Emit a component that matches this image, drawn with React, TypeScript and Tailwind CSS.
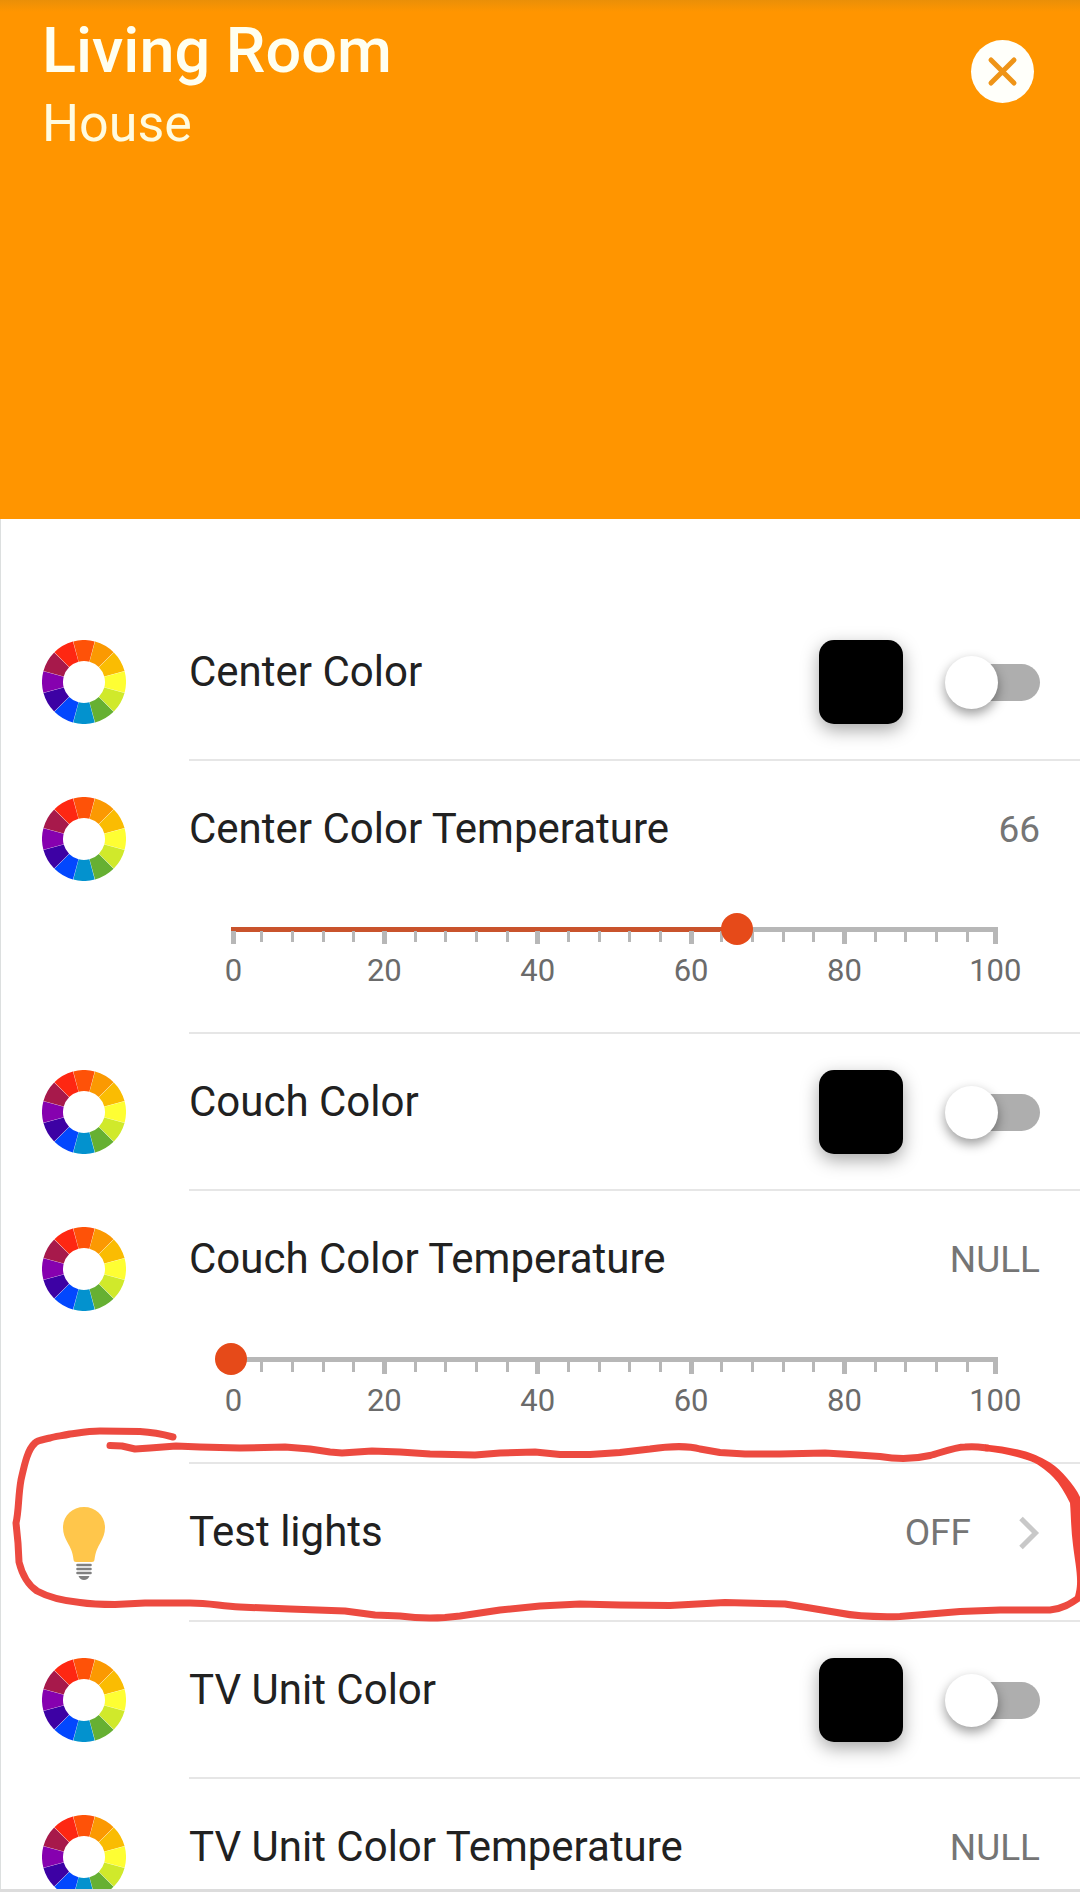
import React, { useState } from 'react'

type Item = {
  label: string
  type: 'switch' | 'slider' | 'group'
  value?: number | null
}

const items: Item[] = [
  { label: 'Center Color',              type: 'switch' },
  { label: 'Center Color Temperature',  type: 'slider', value: 66 },
  { label: 'Couch Color',               type: 'switch' },
  { label: 'Couch Color Temperature',   type: 'slider', value: null },
  { label: 'Test lights',               type: 'group' },
  { label: 'TV Unit Color',             type: 'switch' },
  { label: 'TV Unit Color Temperature', type: 'slider', value: null },
]

const rowHeights: Record<Item['type'], string> = {
  switch: 'h-[157px]',
  slider: 'h-[273px]',
  group: 'h-[158px]',
}

// clockwise, starting at the top
const wheelColors = [
  '#fe5208', '#fb9902', '#fabc02', '#fefe33', '#d0e92b', '#66b032',
  '#0392ce', '#0247fe', '#3d01a4', '#8601af', '#a7194b', '#fe2712',
]

const ticks = Array.from({ length: 26 }, (_, i) => i * 4)

const point = (deg: number, r: number) => {
  const a = ((deg - 90) * Math.PI) / 180
  return `${(42 + r * Math.cos(a)).toFixed(2)} ${(42 + r * Math.sin(a)).toFixed(2)}`
}

const ColorWheel: React.FC = () => (
  <svg viewBox="0 0 84 84" className="size-[84px]" aria-hidden="true">
    {wheelColors.map((c, i) => {
      const from = i * 30 - 14.75
      const to = from + 29.5
      return (
        <path key={c} fill={c}
          d={`M${point(from, 42)}A42 42 0 0 1 ${point(to, 42)}L${point(to, 21)}A21 21 0 0 0 ${point(from, 21)}Z`} />
      )
    })}
  </svg>
)

const Bulb: React.FC = () => (
  <svg viewBox="0 0 84 84" className="size-[84px]" aria-hidden="true">
    <path fill="#ffc64b" d="M42 7c12 0 21 9 21 20.500c0 6-2 10.500-4.500 15c-3 5.500-5 9-6 17c-.3 1.800-1 2.500-2.500 2.500H34c-1.500 0-2.200-.7-2.500-2.500c-1-8-3-11.500-6-17C23 38 21 33.500 21 27.500C21 16 30 7 42 7Z" />
    <path stroke="#808080" strokeWidth="2.600" strokeLinecap="round" d="M35.500 65h13M35.500 69h13M35.500 73h13" />
    <path fill="#808080" d="M36.500 76h11c-1 2.500-3 4-5.500 4s-4.500-1.500-5.500-4Z" />
  </svg>
)

const Slider: React.FC<{ label: string; value: number; onChange: (v: number) => void }> = ({ label, value, onChange }) => (
  <div className="ml-[26px] mr-[66px] mt-[59px]">
    <div className="grid items-center">
      <div className="col-start-1 row-start-1 mx-4 h-[5px] bg-[#b7b7b7]">
        <div className="h-full bg-[#c9532c]" style={{ width: `${value}%` }} />
      </div>
      <input type="range" min={0} max={100} value={value} aria-label={label}
        onChange={e => onChange(Number(e.target.value))}
        className="relative z-10 col-start-1 row-start-1 h-8 w-full cursor-pointer appearance-none bg-transparent [&::-webkit-slider-thumb]:size-8 [&::-webkit-slider-thumb]:appearance-none [&::-webkit-slider-thumb]:rounded-full [&::-webkit-slider-thumb]:bg-[#e64a19]" />
    </div>
    <div className="-mt-[14px] mx-4 flex justify-between" aria-hidden="true">
      {ticks.map(t => (
        <div key={t} className={`flex w-0 ${t === 0 ? 'justify-start' : t === 100 ? 'justify-end' : 'justify-center'}`}>
          {t % 20 === 0 ? (
            <div className="flex w-[5px] shrink-0 flex-col items-center">
              <div className="h-[13px] w-[5px] bg-[#b7b7b7]" />
              <span className="mt-[9px] text-[31px] leading-9 text-[#6b6b6b]">{t}</span>
            </div>
          ) : (
            <div className="h-[11px] w-[3px] shrink-0 bg-[#b7b7b7]" />
          )}
        </div>
      ))}
    </div>
  </div>
)

const Switch: React.FC<{ label: string }> = ({ label }) => {
  const [on, setOn] = useState(false)
  return (
    <div className="mr-10 mt-9 flex h-[84px] items-center gap-[47px]">
      <button aria-label={`Pick ${label}`} className="size-[84px] rounded-[15px] bg-black shadow-[0_6px_18px_rgba(0,0,0,0.35)]" />
      <input type="checkbox" role="switch" aria-label={label} checked={on} onChange={e => setOn(e.target.checked)}
        className="h-[37px] w-[90px] cursor-pointer appearance-none rounded-full bg-[#aeaeae] before:-ml-[5px] before:-mt-2 before:block before:size-[53px] before:rounded-full before:bg-white before:shadow-[0_5px_12px_rgba(0,0,0,0.4)] checked:bg-[#f0a080] checked:before:ml-[42px]" />
    </div>
  )
}

// hand-drawn marker around the row
const Marker: React.FC = () => (
  <svg viewBox="0 1420 1080 220" preserveAspectRatio="none" aria-hidden="true"
    className="pointer-events-none absolute -top-11 left-0 z-20 h-[220px] w-full">
    <g fill="none" stroke="#ec4a40" strokeWidth="7" strokeLinecap="round" strokeLinejoin="round">
      <path d="M173 1437C162 1434 150 1432 140 1431.500L100 1431C88 1431 78 1433 70 1434C62 1436 55 1436 50 1438C42 1440 38 1440 35 1443C27 1450 24 1467 21 1480C18 1497 19 1510 16 1523L18 1543L19 1562C22 1574 28 1585 37 1591C48 1597 65 1601 80 1602.500C90 1604 105 1604.500 115 1604.500L145 1603H190C210 1603 220 1606 240 1607L290 1609L345 1611L375 1615L400 1616C415 1618 430 1618.500 445 1617.500L460 1616L500 1610L540 1606L580 1604L620 1605L670 1605.500L725 1602.500L785 1604L810 1608L840 1613C855 1616 880 1617 900 1616.500L960 1611.500L1000 1610L1050 1610C1062 1609 1070 1604 1080 1597" />
      <path d="M110 1445.500L122 1446L135 1449L150 1448L176 1446L200 1447L240 1448L285 1447L310 1449L330 1452L342 1453L372 1451L400 1452L430 1454L475 1455L500 1453L535 1452L560 1454.500L590 1454.500L620 1452.500L650 1449C670 1446 690 1446 700 1449L720 1452.500L745 1454H780L825 1453L850 1454.500L880 1456.500C895 1459 915 1459 930 1455.500C940 1453 955 1447 965 1447C975 1446 980 1447 987 1448" />
    </g>
    <path fill="#f04438" d="M985 1444.500C1000 1446 1013 1448 1026 1451.500C1036 1455 1043 1458 1050 1462.500C1057 1467 1062 1472 1067 1478C1072 1484 1077 1490 1080 1497V1599L1073 1605L1076 1592C1079 1579 1075 1562 1073 1545C1071 1530 1071 1515 1070 1503C1065 1493 1060 1484 1053 1477C1045 1469 1037 1463 1027 1460C1012 1455 1000 1453 985 1451Z" />
  </svg>
)

const Row: React.FC<{ item: Item }> = ({ item }) => {
  const [value, setValue] = useState(item.value ?? null)
  const group = item.type === 'group'

  return (
    <li className={`flex shrink-0 ${group ? 'relative' : ''}`}>
      <div className="w-[189px] shrink-0 pl-[42px] pt-9">{group ? <Bulb /> : <ColorWheel />}</div>
      <div className={`flex-1 border-b-2 border-[#e6e6e6] ${rowHeights[item.type]}`}>
        <div className="flex justify-between">
          <span className="pt-11 text-[42px] leading-[48px] text-[#212121]">{item.label}</span>
          {item.type === 'switch' && <Switch label={item.label} />}
          {item.type === 'slider' && (
            <span className="mr-10 pt-[45px] text-[37px] leading-[48px] text-[#757575]">{value ?? 'NULL'}</span>
          )}
          {group && (
            <button aria-label="Test lights, off" className="mr-10 mt-[45px] flex h-12 items-center gap-[47px] text-[37px] leading-[48px] text-[#757575]">
              OFF
              <svg viewBox="0 0 22 34" className="h-[34px] w-[22px]" fill="none" stroke="#c8c8c8" strokeWidth="5" aria-hidden="true">
                <path d="M3 2.500L17.500 17L3 31.500" />
              </svg>
            </button>
          )}
        </div>
        {item.type === 'slider' && <Slider label={item.label} value={value ?? 0} onChange={setValue} />}
      </div>
      {group && <Marker />}
    </li>
  )
}

export default function App() {
  return (
    <div className="flex h-screen flex-col bg-white pb-[3px] font-[Roboto,sans-serif]">
      <header className="flex h-[519px] shrink-0 items-start justify-between bg-[#ff9500] bg-linear-to-b from-[#ea8f08] to-[#ff9500] to-[12px] pl-[42px] pr-[46px] text-[#fffff0]">
        <div className="pt-[14px]">
          <h1 className="text-[63px] leading-[74px] font-medium">Living Room</h1>
          <p className="text-[52px] leading-[72px] text-[#fffbe0]">House</p>
        </div>
        <button aria-label="Close" className="mt-10 size-[63px] rounded-full bg-[#fffffa]">
          <svg viewBox="0 0 63 63" className="size-full" stroke="#ef9417" strokeWidth="5" strokeLinecap="round" aria-hidden="true">
            <path d="M20 20L43 43M43 20L20 43" />
          </svg>
        </button>
      </header>
      <main className="min-h-0 flex-1 overflow-y-auto border-b-[3px] border-[#dcdcdc] shadow-[inset_1px_0_0_#dcdfdf] [scrollbar-width:none]">
        <ul className="flex flex-col pt-[85px]">
          {items.map(item => <Row key={item.label} item={item} />)}
        </ul>
      </main>
    </div>
  )
}
